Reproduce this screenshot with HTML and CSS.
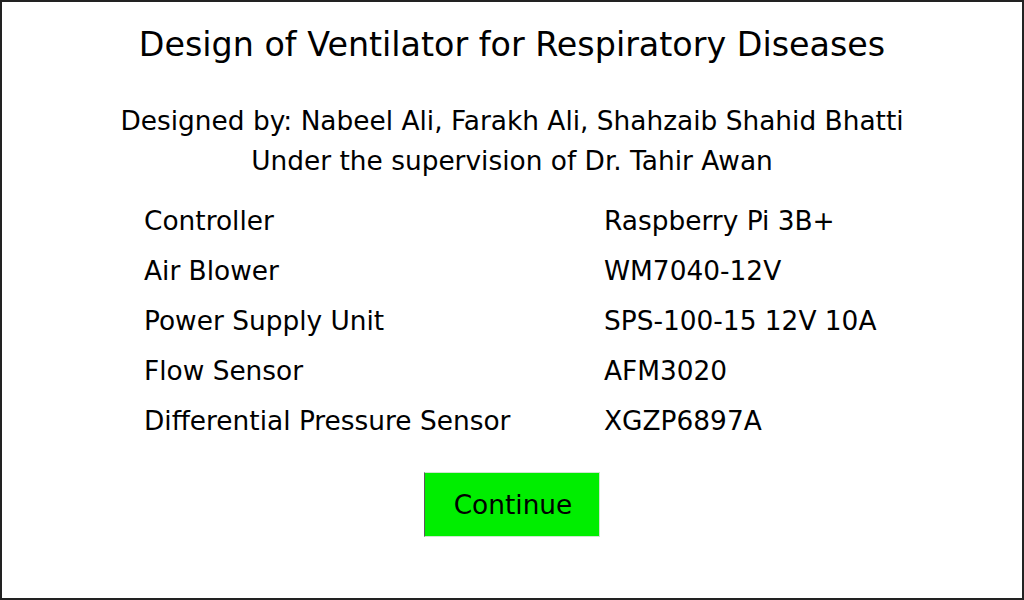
FILE: index.html
```html
<!DOCTYPE html>
<html>
<head>
<meta charset="utf-8">
<link rel="stylesheet" href="styles.css">
</head>
<body>
<div class="screen">
  <h1 class="title">Design of Ventilator for Respiratory Diseases</h1>
  <div class="credits">
    <p class="line">Designed by: Nabeel Ali, Farakh Ali, Shahzaib Shahid Bhatti</p>
    <p class="line">Under the supervision of Dr. Tahir Awan</p>
  </div>
  <div class="specs">
    <div class="label">Controller</div><div class="value">Raspberry Pi 3B+</div>
    <div class="label">Air Blower</div><div class="value">WM7040-12V</div>
    <div class="label">Power Supply Unit</div><div class="value">SPS-100-15 12V 10A</div>
    <div class="label">Flow Sensor</div><div class="value">AFM3020</div>
    <div class="label">Differential Pressure Sensor</div><div class="value">XGZP6897A</div>
  </div>
  <div class="actions">
    <button class="continue">Continue</button>
  </div>
</div>
</body>
</html>
```
FILE: styles.css
```css
html, body {
  margin: 0;
  padding: 0;
  background: #ffffff;
}
.screen {
  box-sizing: border-box;
  width: 1024px;
  height: 600px;
  border: 2px solid #222222;
  font-family: "DejaVu Sans", sans-serif;
  color: #000000;
  display: flex;
  flex-direction: column;
  align-items: center;
}
.title {
  margin: 23px 0 0 0;
  font-size: 33.33px;
  font-weight: normal;
  line-height: 40px;
  white-space: nowrap;
}
.credits {
  margin-top: 36px;
  text-align: center;
}
.line {
  margin: 0;
  font-size: 26.4px;
  line-height: 40px;
  white-space: nowrap;
}
.specs {
  align-self: stretch;
  margin: 15px 0 0 142px;
  display: grid;
  grid-template-columns: 460px auto;
  grid-auto-rows: 50px;
  font-size: 26.4px;
  line-height: 50px;
  white-space: nowrap;
}
.actions {
  margin-top: 26px;
}
.continue {
  box-sizing: border-box;
  width: 176px;
  height: 65px;
  background: #00ee00;
  border: 1px solid #cfe5cf;
  border-left-color: #5a5a5a;
  font-family: "DejaVu Sans", sans-serif;
  font-size: 26.4px;
  color: #000000;
  padding: 0 0 0 2px;
}
```
